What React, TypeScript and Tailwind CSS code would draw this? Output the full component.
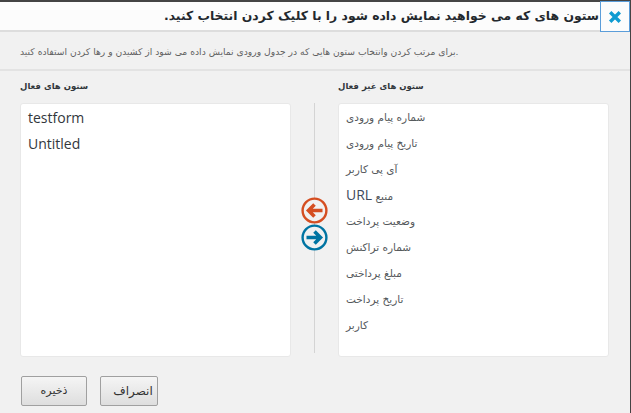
const ACTIVE = ['testform', 'Untitled']

const INACTIVE = [
  'شماره پیام ورودی',
  'تاریخ پیام ورودی',
  'آی پی کاربر',
  'منبع URL',
  'وضعیت پرداخت',
  'شماره تراکنش',
  'مبلغ پرداختی',
  'تاریخ پرداخت',
  'کاربر',
]

function CircleArrow({ color, dir }: { color: string; dir: 'left' | 'right' }) {
  return (
    <svg width="27" height="27" viewBox="0 0 27 27" fill="none">
      <circle cx="13.5" cy="13.5" r="11.9" stroke={color} strokeWidth="2.4" fill="#f1f1f1" />
      {dir === 'left' ? (
        <path d="M21.5 13.5 H8 M13.5 7.5 L7.5 13.5 L13.5 19.5" stroke={color} strokeWidth="3.6" />
      ) : (
        <path d="M5.5 13.5 H19 M13.5 7.5 L19.5 13.5 L13.5 19.5" stroke={color} strokeWidth="3.6" />
      )}
    </svg>
  )
}

export default function App() {
  return (
    <div className="w-[631px] h-[413px] overflow-hidden bg-[#444444] font-['Open_Sans',sans-serif] pt-[2px] pr-px">
      <div className="h-[411px] bg-[#f1f1f1] flex flex-col">
        {/* Title bar */}
        <div className="h-[30px] shrink-0 bg-[#fcfcfc] border-b-2 border-[#dddddd] flex justify-between items-stretch">
          <div className="flex-1 flex justify-end items-center pr-px overflow-hidden">
            <h1 dir="rtl" className="font-['DejaVu_Sans',sans-serif] font-bold text-[12.4px] leading-none text-[#23282d] whitespace-nowrap">
              ستون های که می خواهید نمایش داده شود را با کلیک کردن انتخاب کنید.
            </h1>
          </div>
          <button className="w-[30px] -mt-px mb-[-2px] border border-[#5b9dd9] bg-[#fcfcfc] flex items-center justify-center">
            <svg width="14" height="14" viewBox="0 0 14 14">
              <path d="M2.2 2.2 L11.8 11.8 M11.8 2.2 L2.2 11.8" stroke="#0f9bd1" strokeWidth="3.4" />
            </svg>
          </button>
        </div>

        {/* Description */}
        <div className="h-[39px] shrink-0 border-b-2 border-[#e3e3e3] flex items-center pl-5 pt-[2px]">
          <p className="font-['DejaVu_Sans',sans-serif] text-[9.2px] text-[#5f5f5f] whitespace-nowrap">
            برای مرتب کردن وانتخاب ستون هایی که در جدول ورودی نمایش داده می شود از کشیدن و رها کردن استفاده کنید.
          </p>
        </div>

        {/* Columns */}
        <div className="flex px-5 pt-[8px]">
          <div className="w-[271px] shrink-0">
            <div className="h-[24px] flex items-center font-['DejaVu_Sans',sans-serif] font-bold text-[8.5px] text-[#32373c] pb-[9px] whitespace-nowrap">
              ستون های فعال
            </div>
            <ul className="h-[254px] bg-white rounded-[3px] border border-[#e8e8e8] pl-[7px] text-[14px] text-[#32373c]">
              {ACTIVE.map(name => (
                <li key={name} className="h-[26px] flex items-center">{name}</li>
              ))}
            </ul>
          </div>

          <div className="w-[47px] shrink-0 relative flex flex-col items-center mt-[24px] h-[250px]">
            <div className="absolute left-[23px] top-0 bottom-0 w-px bg-[#d4d4d4]" />
            <div className="relative flex flex-col mt-[94px]">
              <CircleArrow color="#d54e21" dir="left" />
              <CircleArrow color="#0074a2" dir="right" />
            </div>
          </div>

          <div className="w-[271px] shrink-0">
            <div className="h-[24px] flex items-center font-['DejaVu_Sans',sans-serif] font-bold text-[8.5px] text-[#32373c] pb-[9px] whitespace-nowrap">
              ستون های غیر فعال
            </div>
            <ul className="h-[254px] bg-white rounded-[3px] border border-[#e8e8e8] pl-[7px] font-['DejaVu_Sans',sans-serif] text-[10.5px] text-[#55595c]">
              {INACTIVE.map(name => (
                <li key={name} className="h-[26px] flex items-center leading-none">
                  <span dir="rtl" className="whitespace-nowrap">
                    {name.endsWith(' URL') ? (
                      <>
                        {name.slice(0, -3)}
                        <span className="font-['Open_Sans',sans-serif] text-[14px] text-[#3d4a5c]">URL</span>
                      </>
                    ) : name}
                  </span>
                </li>
              ))}
            </ul>
          </div>
        </div>

        {/* Footer */}
        <div className="flex gap-[13px] pl-[21px] pt-[19px]">
          <button className="w-[66px] h-[30px] rounded-[2px] border border-[#a0a0a0] bg-gradient-to-b from-[#f5f5f5] to-[#dedede] font-['DejaVu_Sans',sans-serif] text-[11px] text-[#333333]">
            ذخیره
          </button>
          <button className="w-[58px] h-[30px] rounded-[2px] border border-[#a0a0a0] bg-gradient-to-b from-[#f5f5f5] to-[#dedede] font-['DejaVu_Sans',sans-serif] text-[12px] tracking-[1.2px] text-[#333333] pl-[8px] whitespace-nowrap">
            انصراف
          </button>
        </div>
      </div>
    </div>
  )
}
